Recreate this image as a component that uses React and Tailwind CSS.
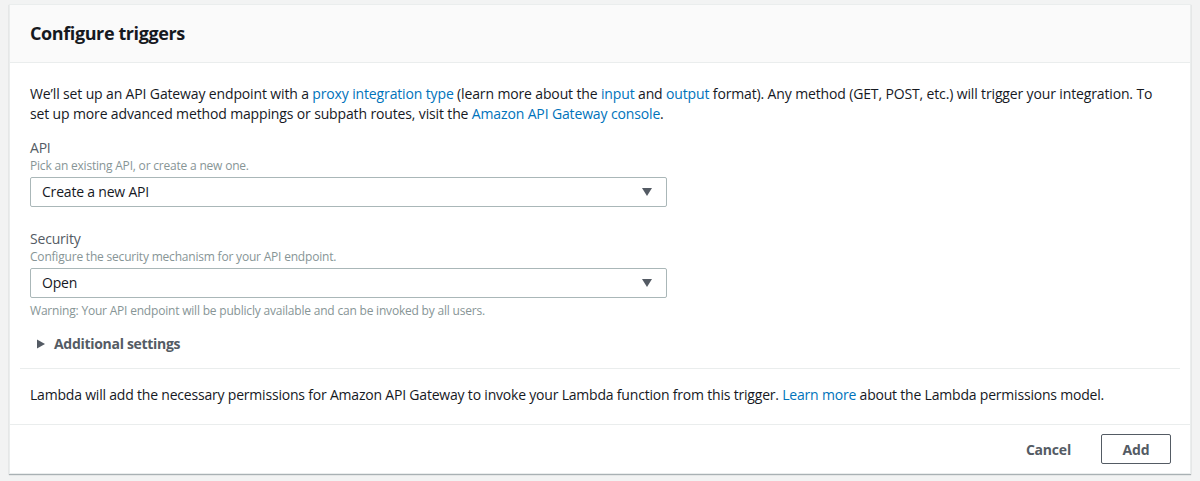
import { useState } from 'react';

const FONT = { fontFamily: '"Open Sans", "Liberation Sans", sans-serif' };

function Caret() {
  return (
    <svg width="12" height="10" viewBox="0 0 12 10" className="shrink-0">
      <path d="M1 1h10L6 9z" fill="#545b64" />
    </svg>
  );
}

function SelectBox({ value }) {
  return (
    <div className="flex h-[30px] w-[637px] items-center justify-between rounded-[2px] border border-[#aab7b8] bg-white pl-[11px] pr-[13px] text-[14px] text-[#16191f]">
      <span>{value}</span>
      <Caret />
    </div>
  );
}

function Field({ label, hint, value, warning }) {
  return (
    <div className="flex flex-col">
      <div className="text-[14px] leading-[20px] text-[#545b64]">{label}</div>
      <div className="text-[12px] leading-[16px] text-[#879596]">{hint}</div>
      <div className="mt-[3px]">
        <SelectBox value={value} />
      </div>
      {warning && (
        <div className="mt-[5px] text-[12px] leading-[16px] text-[#879596]">{warning}</div>
      )}
    </div>
  );
}

export default function App() {
  const [open, setOpen] = useState(false);
  const link = 'text-[#0073bb]';

  return (
    <div className="min-h-[481px] bg-[#f2f3f3] px-[9px] pt-[4px] pb-[7px] tracking-[-0.2px]" style={FONT}>
      <div className="border border-[#eaeded] bg-white shadow-[0_1px_1px_0_rgba(0,28,36,0.3)]">
        {/* header */}
        <div className="flex h-[58px] items-center border-b border-[#eaeded] bg-[#fafafa] px-[20px]">
          <h2 className="text-[18px] font-bold tracking-[-0.4px] text-[#16191f]">Configure triggers</h2>
        </div>

        {/* body */}
        <div className="px-[20px] pt-[21px] text-[14px] leading-[20px] text-[#16191f]">
          <p className="tracking-[-0.14px]">
            We’ll set up an API Gateway endpoint with a <a className={link}>proxy integration type</a> (learn more
            about the <a className={link}>input</a> and <a className={link}>output</a> format). Any method (GET, POST,
            etc.) will trigger your integration. To set up more advanced method mappings or subpath routes, visit the{' '}
            <a className={link}>Amazon API Gateway console</a>.
          </p>

          <div className="mt-[14px] flex flex-col gap-[22px]">
            <Field label="API" hint="Pick an existing API, or create a new one." value="Create a new API" />
            <Field
              label="Security"
              hint="Configure the security mechanism for your API endpoint."
              value="Open"
              warning="Warning: Your API endpoint will be publicly available and can be invoked by all users."
            />
          </div>

          <button
            onClick={() => setOpen(!open)}
            className="mt-[15px] flex items-center gap-[8px] pl-[6px] font-bold tracking-[-0.3px] text-[#545b64]"
          >
            <svg width="10" height="10" viewBox="0 0 10 10" className={open ? 'rotate-90' : ''}>
              <path d="M1 0.5v9L9 5z" fill="#545b64" />
            </svg>
            <span>Additional settings</span>
          </button>
        </div>

        <div className="mx-[10px] mt-[14px] border-t border-[#eaeded]" />

        <div className="px-[20px] pt-[16px] pb-[19px] text-[14px] leading-[20px] text-[#16191f]">
          Lambda will add the necessary permissions for Amazon API Gateway to invoke your Lambda function from this
          trigger. <a className={link}>Learn more</a> about the Lambda permissions model.
        </div>

        {/* footer */}
        <div className="flex items-center justify-end gap-[30px] border-t border-[#eaeded] px-[19px] pt-[9px] pb-[9px]">
          <button className="text-[14px] font-bold text-[#545b64]">Cancel</button>
          <button className="h-[30px] w-[70px] rounded-[2px] border border-[#545b64] bg-white text-[14px] font-bold text-[#545b64]">
            Add
          </button>
        </div>
      </div>
    </div>
  );
}
